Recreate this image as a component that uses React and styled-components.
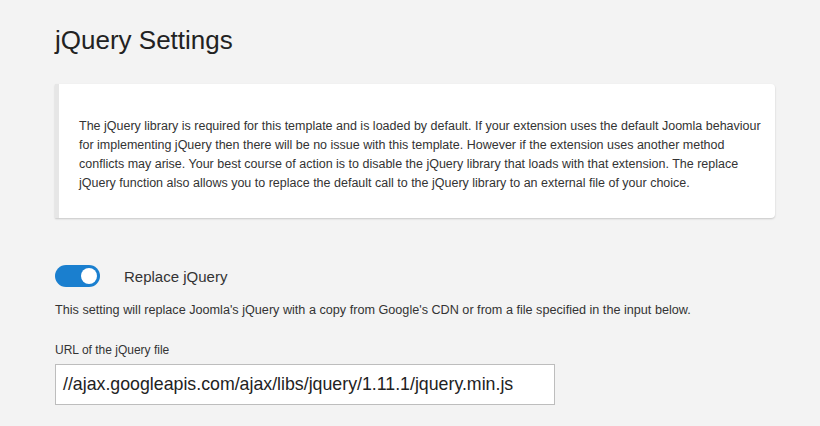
import React from "react";
import styled, { createGlobalStyle } from "styled-components";

const Global = createGlobalStyle`
  html, body { margin: 0; padding: 0; background: #f3f3f3; }
  body { font-family: "Liberation Sans", Arial, sans-serif; color: #333; }
`;

const Page = styled.div`
  padding: 24px 45px 0 55px;
  width: 720px;
`;

const Title = styled.h1`
  margin: 0;
  font-size: 26px;
  font-weight: 400;
  line-height: 32px;
  color: #222;
`;

const Card = styled.div`
  margin-top: 28px;
  background: #fff;
  border-left: 4px solid #e6e6e6;
  border-radius: 0 4px 4px 0;
  box-shadow: 0 1px 2px rgba(0, 0, 0, 0.18);
  padding: 33px 10px 25px 20px;
`;

const CardText = styled.p`
  margin: 0;
  font-size: 12.5px;
  line-height: 19px;
  color: #333;
`;

const ToggleRow = styled.div`
  margin-top: 47px;
  display: flex;
  align-items: center;
  gap: 24px;
`;

const Switch = styled.div`
  position: relative;
  width: 45px;
  height: 22px;
  border-radius: 11px;
  background: ${(p) => (p.$on ? "#1a7fcf" : "#ccc")};
  flex: none;
`;

const Knob = styled.span`
  position: absolute;
  top: 3px;
  left: ${(p) => (p.$on ? "26px" : "3px")};
  width: 16px;
  height: 16px;
  border-radius: 50%;
  background: #fff;
`;

const ToggleLabel = styled.span`
  font-size: 15px;
  color: #333;
`;

const Help = styled.p`
  margin: 14px 0 0;
  font-size: 12.65px;
  line-height: 18px;
  color: #333;
`;

const FieldLabel = styled.label`
  display: block;
  margin-top: 23px;
  font-size: 12px;
  line-height: 16px;
  color: #333;
`;

const Input = styled.div`
  margin-top: 6px;
  width: 500px;
  height: 41px;
  box-sizing: border-box;
  background: #fff;
  border: 1px solid #bdbdbd;
  padding: 0 7px;
  display: flex;
  align-items: center;
  font-size: 17.75px;
  color: #222;
`;

export default function App() {
  return (
    <>
      <Global />
      <Page>
        <Title>jQuery Settings</Title>
        <Card>
          <CardText>
            The jQuery library is required for this template and is loaded by default. If your extension uses the default Joomla behaviour for implementing jQuery then there will be no issue with this template. However if the extension uses another method conflicts may arise. Your best course of action is to disable the jQuery library that loads with that extension. The replace jQuery function also allows you to replace the default call to the jQuery library to an external file of your choice.
          </CardText>
        </Card>
        <ToggleRow>
          <Switch $on>
            <Knob $on />
          </Switch>
          <ToggleLabel>Replace jQuery</ToggleLabel>
        </ToggleRow>
        <Help>
          This setting will replace Joomla's jQuery with a copy from Google's CDN or from a file specified in the input below.
        </Help>
        <FieldLabel>URL of the jQuery file</FieldLabel>
        <Input>//ajax.googleapis.com/ajax/libs/jquery/1.11.1/jquery.min.js</Input>
      </Page>
    </>
  );
}
